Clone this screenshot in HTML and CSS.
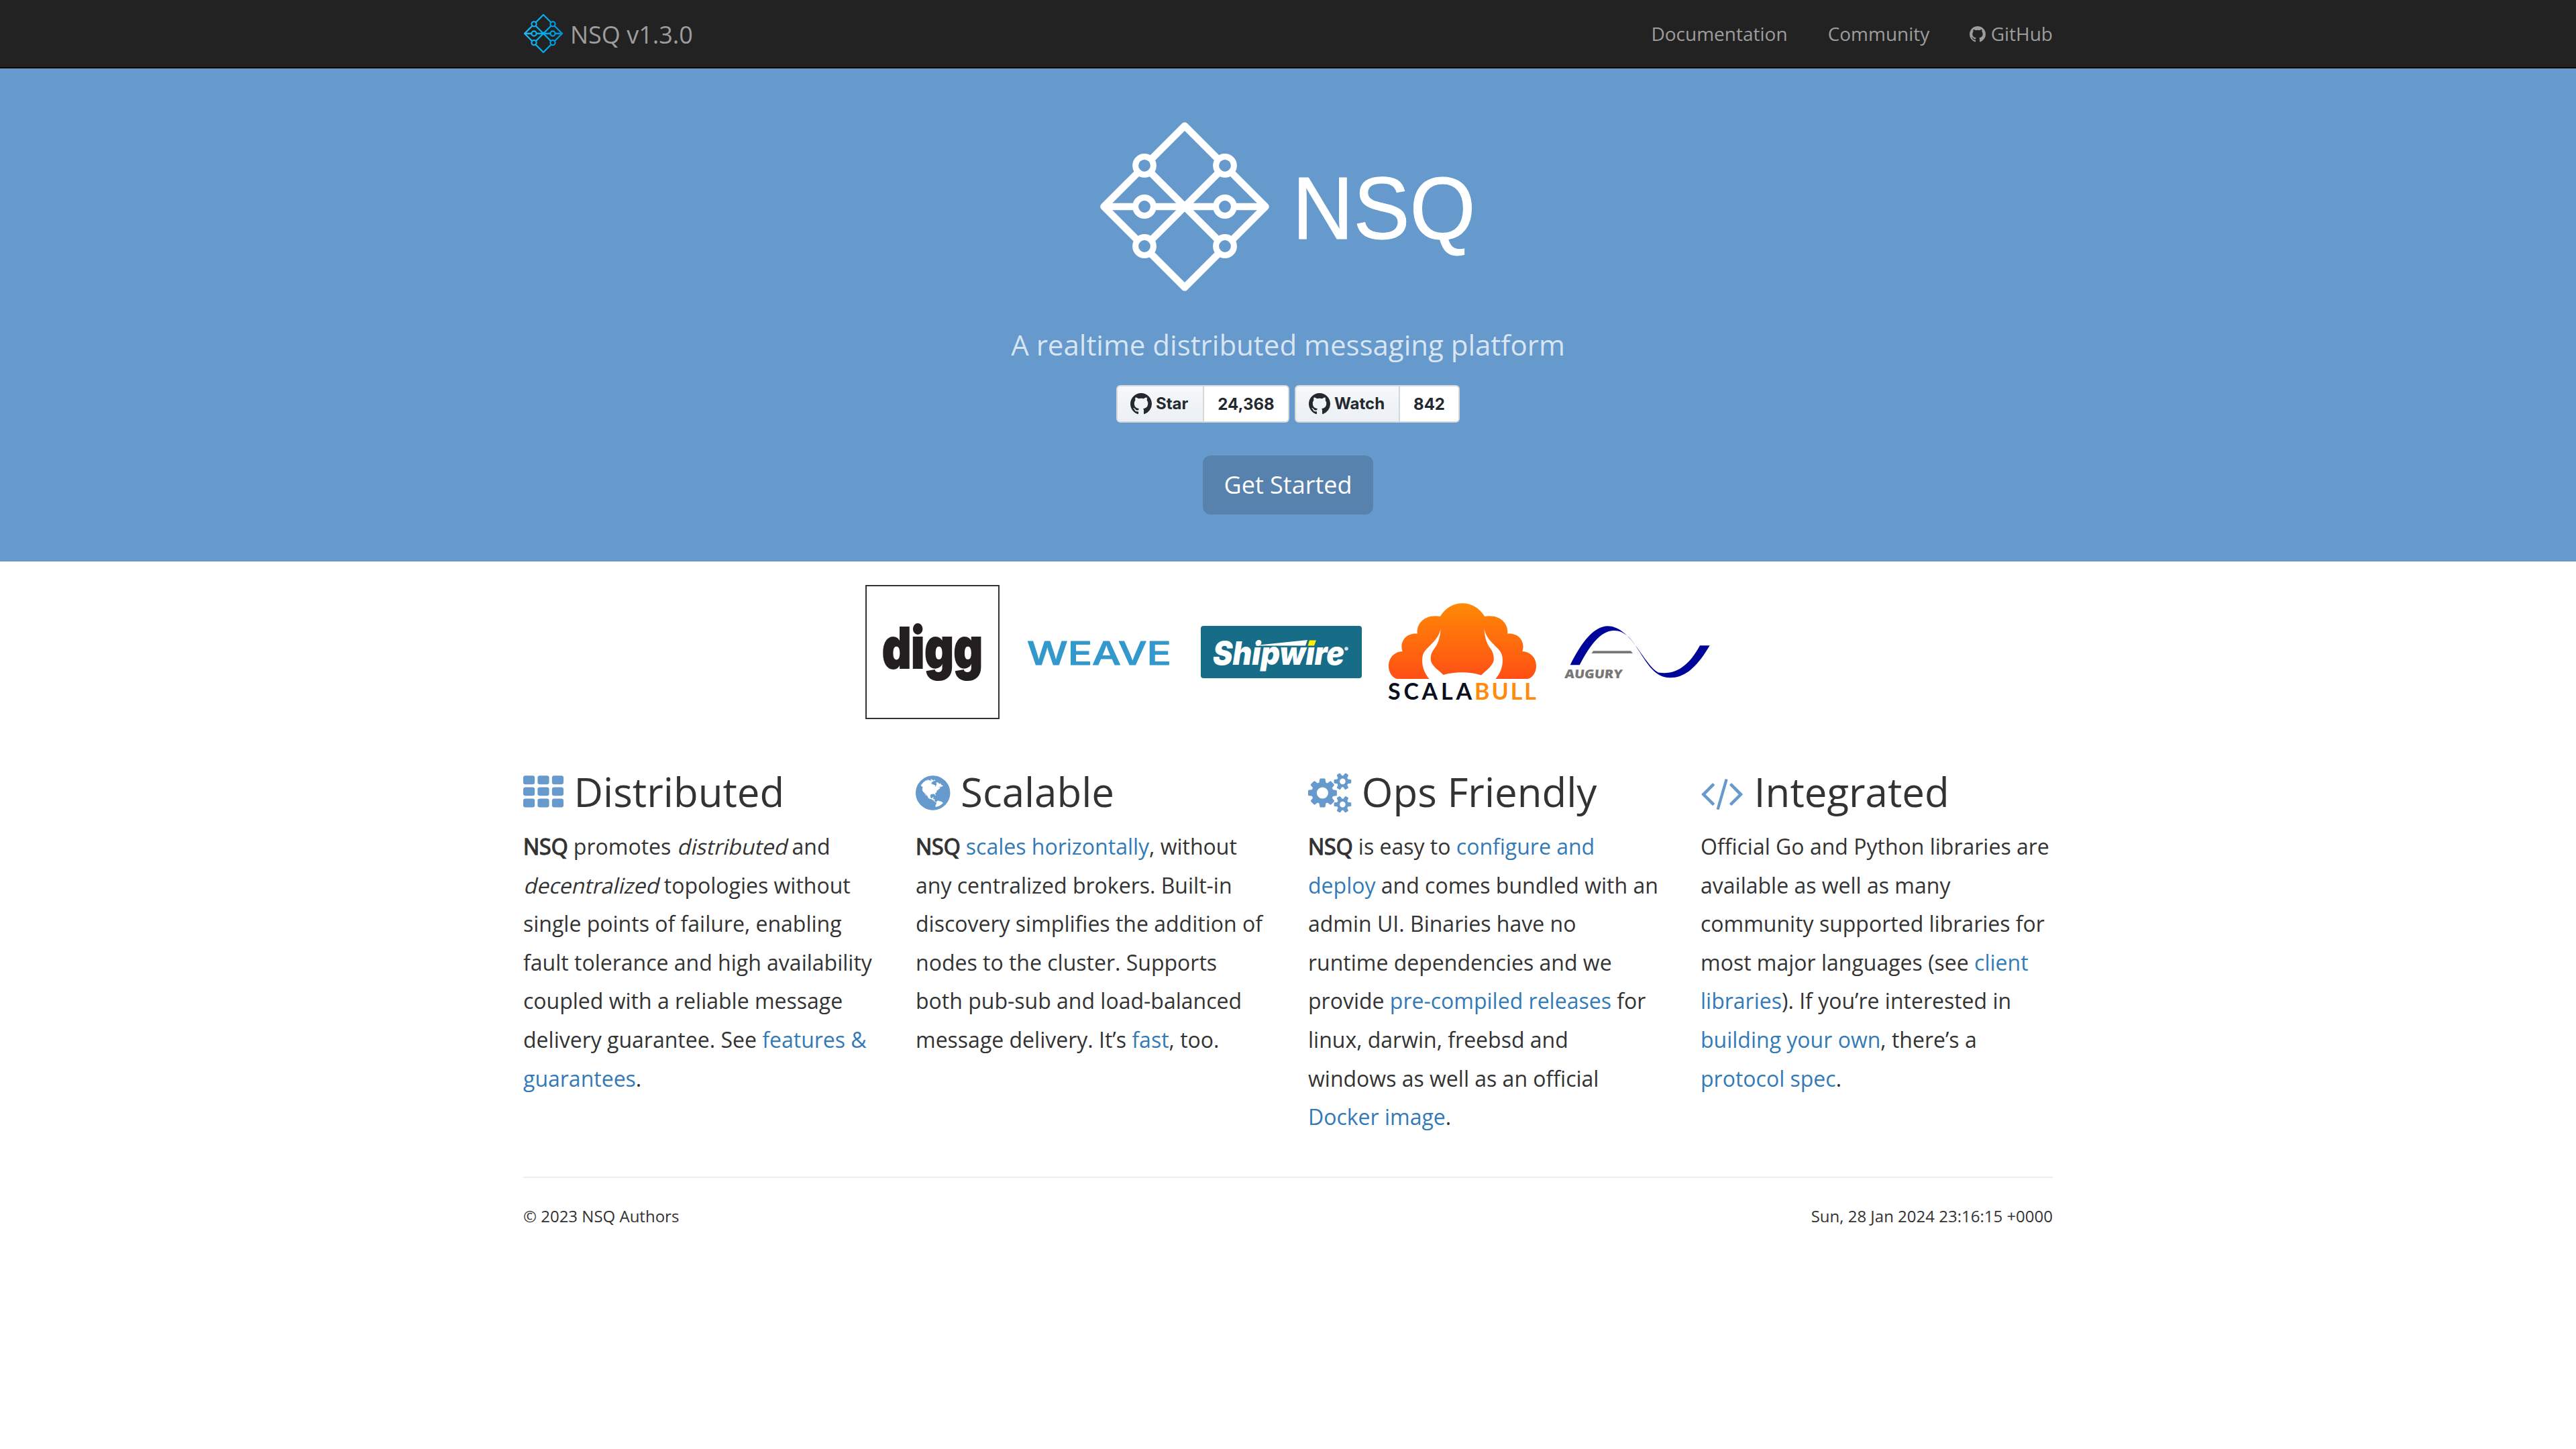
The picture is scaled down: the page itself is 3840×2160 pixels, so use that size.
FILE: index.html
```html
<!DOCTYPE html>
<html lang="en">
<head>
<meta charset="utf-8">
<title>NSQ</title>
<link rel="stylesheet" href="styles.css">
</head>
<body>
<svg class="defs" width="0" height="0" aria-hidden="true">
  <symbol id="octocat" viewBox="0 0 16 16"><path d="M8 0C3.58 0 0 3.58 0 8c0 3.54 2.29 6.53 5.47 7.59.4.07.55-.17.55-.38 0-.19-.01-.82-.01-1.49-2.01.37-2.53-.49-2.69-.94-.09-.23-.48-.94-.82-1.13-.28-.15-.68-.52-.01-.53.63-.01 1.08.58 1.23.82.72 1.21 1.87.87 2.33.66.07-.52.28-.87.51-1.07-1.78-.2-3.64-.89-3.64-3.95 0-.87.31-1.59.82-2.15-.08-.2-.36-1.02.08-2.12 0 0 .67-.21 2.2.82.64-.18 1.32-.27 2-.27.68 0 1.36.09 2 .27 1.53-1.04 2.2-.82 2.2-.82.44 1.1.16 1.92.08 2.12.51.56.82 1.27.82 2.15 0 3.07-1.87 3.75-3.65 3.95.29.25.54.73.54 1.48 0 1.07-.01 1.93-.01 2.2 0 .21.15.46.55.38A8.013 8.013 0 0016 8c0-4.42-3.58-8-8-8z"/></symbol>
</svg>

<nav class="navbar">
  <div class="container navbar-inner">
    <a class="brand" href="#">
      <svg class="brand-mark" viewBox="0 0 60 60">
        <defs><linearGradient id="brand" gradientUnits="userSpaceOnUse" x1="0" y1="0" x2="60" y2="0"><stop offset="0" stop-color="#2ab8f2"/><stop offset=".5" stop-color="#00adef"/><stop offset="1" stop-color="#0090da"/></linearGradient></defs>
        <g fill="none" stroke="url(#brand)" stroke-width="2.3" stroke-linejoin="round">
          <path d="M30 2L58 30L30 58L2 30ZM16 16L44 44M44 16L16 44"/>
          <path d="M2 30H58.01L58 30.01"/>
        </g>
        <g fill="#222" stroke="url(#brand)" stroke-width="2.1">
          <circle cx="16" cy="15.8" r="3.6"/><circle cx="44" cy="15.8" r="3.6"/>
          <circle cx="16" cy="30" r="3.6"/><circle cx="44" cy="30" r="3.6"/>
          <circle cx="16" cy="43.6" r="3.6"/><circle cx="44" cy="43.6" r="3.6"/>
        </g>
      </svg>
      <span>NSQ v1.3.0</span>
    </a>
    <div class="nav-links">
      <a href="#">Documentation</a>
      <a href="#">Community</a>
      <a href="#"><svg class="fa fa-narrow" viewBox="128 0 1536 1792"><path d="M896 128q209 0 385.5 103t279.5 279.5 103 385.5q0 251-146.5 451.5t-378.5 277.5q-27 5-40-7t-13-30q0-3 .5-76.5t.5-134.5q0-97-52-142 57-6 102.5-18t94-39 81-66.5 53-105 20.5-150.5q0-119-79-206 37-91-8-204-28-9-81 11t-92 44l-38 24q-93-26-192-26t-192 26q-16-11-42.5-27t-83.5-38.5-85-13.5q-45 113-8 204-79 87-79 206 0 85 20.5 150t52.5 105 80.5 67 94 39 102.5 18q-39 36-49 103-21 10-45 15t-57 5-65.5-21.5-55.5-62.5q-19-32-48.5-52t-49.5-24l-20-3q-21 0-29 4.5t-5 11.5 9 14 13 12l7 5q22 10 43.5 38t31.5 51l10 23q13 38 44 61.5t67 30 69.5 7 55.5-3.5l23-4q0 38 .5 88.5t.5 54.5q0 18-13 30t-40 7q-232-77-378.5-277.5t-146.5-451.5q0-209 103-385.5t279.5-279.5 385.5-103z"/></svg> GitHub</a>
    </div>
  </div>
</nav>

<header class="hero">
  <svg class="hero-logo" viewBox="0 0 560 252">
    <g fill="none" stroke="#fff" stroke-width="10.6" stroke-linejoin="round">
      <path d="M126 5.5L246.500 126L126 246.500L5.500 126ZM66 66L186 186M186 66L66 186"/>
      <path d="M5.500 126H246.500"/>
    </g>
    <g fill="#69c" stroke="#fff" stroke-width="9">
      <circle cx="66" cy="64.800" r="13.400"/><circle cx="186" cy="64.800" r="13.400"/>
      <circle cx="66" cy="126" r="13.400"/><circle cx="186" cy="126" r="13.400"/>
      <circle cx="66" cy="185" r="13.400"/><circle cx="186" cy="185" r="13.400"/>
    </g>
    <text class="hero-name" transform="translate(286.500 174) scale(1 1.045)">NSQ</text>
  </svg>
  <p class="lead">A realtime distributed messaging platform</p>
  <div class="gh-buttons">
    <div class="gh"><a class="gh-btn star" href="#"><svg><use href="#octocat"/></svg>Star</a><a class="gh-count stars" href="#">24,368</a></div>
    <div class="gh"><a class="gh-btn watch" href="#"><svg><use href="#octocat"/></svg>Watch</a><a class="gh-count watchers" href="#">842</a></div>
  </div>
  <a class="start" href="#">Get Started</a>
</header>

<section class="logos">
  <div class="digg"><svg viewBox="0 0 196 196"><text x="23" y="122" textLength="150" lengthAdjust="spacingAndGlyphs">digg</text></svg></div>
  <svg class="weave" viewBox="0 0 220 40"><text x="1" y="38.500" textLength="215" lengthAdjust="spacingAndGlyphs">WEAVE</text></svg>
  <svg class="shipwire" viewBox="0 0 240 78">
    <rect width="240" height="78" rx="4" fill="#176c88"/>
    <text x="18" y="58" textLength="196" lengthAdjust="spacingAndGlyphs">Shipwıre</text>
    <path d="M82 29L159 21L156 29.500H82Z" fill="#fff"/>
    <path d="M162 21.500H172L169 29.500H159.500Z" fill="#fff200"/>
    <circle cx="217" cy="34" r="2.800" fill="#cfe2e8"/>
  </svg>
  <svg class="scalabull" viewBox="0 0 220 146">
    <defs><linearGradient id="bull" x1="0" y1="0" x2="0" y2="1"><stop offset="0" stop-color="#ff8905"/><stop offset="1" stop-color="#ff4f15"/></linearGradient></defs>
    <path fill="url(#bull)" d="M12 113C4 110 0 102 0 94C0 81 9 72.500 20.700 72C16 60 24 44 42.800 45.500C41 30 55 16 76.800 20C92 -6.500 128 -6.500 143.200 20C165 16 179 30 177.200 45.500C196 44 204 60 199.300 72C211 72.500 220 81 220 94C220 102 216 110 208 113H159.500C168 103 171 92 169.500 80C168 72 164 69 157 62C149 54 144 47 142.500 38C143 52 147 62 152 68C156 73 158 82 156 88C152 96 145 101 138 107.500C120 102 100 102 81.500 107C75 100 67 96 63.500 88C61.500 82 63 74 68 68C73 62 77 52 77.500 38C76 47 71 54 63 62C56 69 52 72 50.500 80C49 92 52 103 60.500 113Z"/>
    <text x="-1" y="144" textLength="125" lengthAdjust="spacing" fill="#0a1020">SCALA</text>
    <text x="128" y="144" textLength="92" lengthAdjust="spacing" fill="#ff8a0c">BULL</text>
  </svg>
  <svg class="augury" viewBox="0 0 220 80">
    <path fill="#000599" d="M10.700 59.300C27 26 46 1.300 66.700 1.300C82 1.300 95 14 104 25C118 43 130 64 142 70.500C168 75 188 60 204 30.300H218.700C200 62 182 78.300 160 78.300C135 78.300 124 54 109 32C103 22 92 8 76 8C56 8 40 30 24.700 59.300Z"/>
    <path fill="#777" d="M45 38.300H101L104 42H42.500Z"/>
    <text transform="translate(2 79) skewX(-6)" textLength="86" lengthAdjust="spacingAndGlyphs">AUGURY</text>
  </svg>
</section>

<main class="container features">
  <section>
    <h2><svg class="fa" viewBox="0 0 1792 1792"><rect y="128" width="512" height="384" rx="96"/><rect x="640" y="128" width="512" height="384" rx="96"/><rect x="1280" y="128" width="512" height="384" rx="96"/><rect y="640" width="512" height="384" rx="96"/><rect x="640" y="640" width="512" height="384" rx="96"/><rect x="1280" y="640" width="512" height="384" rx="96"/><rect y="1152" width="512" height="384" rx="96"/><rect x="640" y="1152" width="512" height="384" rx="96"/><rect x="1280" y="1152" width="512" height="384" rx="96"/></svg> Distributed</h2>
    <p><b>NSQ</b> promotes <em>distributed</em> and <em>decentralized</em> topologies without single points of failure, enabling fault tolerance and high availability coupled with a reliable message delivery guarantee. See <a href="#">features &amp; guarantees</a>.</p>
  </section>
  <section>
    <h2><svg class="fa fa-narrow" viewBox="128 0 1536 1792"><path d="M896 128q209 0 385.5 103t279.5 279.5 103 385.5-103 385.5-279.5 279.5-385.5 103-385.5-103-279.5-279.5-103-385.5 103-385.5 279.5-279.5 385.5-103zm274 521q-2 1-9.5 9.5t-13.5 9.5q2 0 4.5-5t5-11 3.5-7q6-7 22-15 14-6 52-12 34-8 51 11-2-2 9.5-13t14.5-12q3-2 15-4.5t15-7.5l2-22q-12 1-17.5-7t-6.5-21q0 2-6 8 0-7-4.5-8t-11.5 1-9 1q-10-3-15-7.5t-8-16.5-4-15q-2-5-9.5-11t-9.5-10q-1-2-2.5-5.5t-3-6.5-4-5.5-5.5-2.5-7 5-7.5 10-4.5 5q-3-2-6-1.5t-4.5 1-4.5 3-5 3.5q-3 2-8.5 3t-8.5 2q15-5-1-11-10-4-16-3 9-4 7.5-12t-8.5-14h5q-1-4-8.5-8.5t-17.5-8.5-13-6q-8-5-34-9.5t-33-.5q-5 6-4.5 10.5t4 14 3.5 12.5q1 6-5.5 13t-6.5 12q0 7 14 15.500t10 21.500q-3 8-16 16t-16 12q-5 8-1.500 18.500t10.500 16.500q2 2 1.500 4t-3.500 4.500-5.500 4-6.500 3.500l-3 2q-11 5-20.500-6t-13.500-26q-7-25-16-30-23-8-29 1-5-13-41-26-25-9-58-4 6-1 0-15-7-15-19-12 3-6 4-17.500t1-13.500q3-13 12-23 1-1 7-8.500t9.500-13.500.5-6q35 4 50-11 5-5 11.500-17t10.500-17q9-6 14-5.500t14.500 5.500 14.500 5q14 1 15.500-11t-7.500-20q12 1 3-17-4-7-8-9-12-4-27 5-8 4 2 8-1-1-9.500 10.500t-16.500 17.500-16-5q-1-1-5.500-13.500t-9.500-13.500q-8 0-16 15 3-8-11-15t-24-8q19-12-8-27-7-4-20.500-5t-19.500 4q-5 7-5.500 11.500t5 8 10.500 5.500 11.500 4 8.500 3q14 10 8 14-2 1-8.500 3.500t-11.500 4.500-6 4q-3 4 0 14t-2 14q-5-5-9-17.500t-7-16.500q7 9-25 6l-10-1q-4 0-16 2t-20.500 1-13.500-8q-4-8 0-20 1-4 4-2-4-3-11-9.500t-10-8.500q-46 15-94 41 6 1 12-1 5-2 13-6.500t10-5.500q34-14 42-7l5-5q14 16 20 25-7-4-30-1-20 6-22 12 7 12 5 18-4-3-11.500-10t-14.500-11-15-5q-16 0-22 1-146 80-235 222 7 7 12 8 4 1 5 9t2.500 11 11.500-3q9 8 3 19 1-1 44 27 19 17 21 21 3 11-10 18-1-2-9-9t-9-4q-3 5 .5 18.500t10.500 12.500q-7 0-9.500 16t-2.500 35.500-1 23.500l2 1q-3 12 5.500 34.500t21.500 19.500q-13 3 20 43 6 8 8 9 3 2 12 7.500t15 10 10 10.500q4 5 10 22.500t14 23.500q-2 6 9.500 20t10.500 23q-1 0-2.500 1t-2.500 1q3 7 15.500 14t15.500 13q1 3 2 10t3 11 8 2q2-20-24-62-15-25-17-29-3-5-5.500-15.500t-4.500-14.500q2 0 6 1.500t8.500 3.500 7.500 4 2 3q-3 7 2 17.500t12 18.500 17 19 12 13q6 6 14 19.500t0 13.500q9 0 20 10.500t17 19.500q5 8 8 26t5 24q2 7 8.500 13.500t12.500 9.500l16 8 13 7q5 2 18.500 10.500t21.500 11.500q10 4 16 4t14.500-2.500 13.500-3.500q15-2 29 15t21 21q36 19 55 11-2 1 .5 7.500t8 15.500 9 14.500 5.500 8.500q5 6 18 15t18 15q6-4 7-9-3 8 7 20t18 10q14-3 14-32-31 15-49-18 0-1-2.500-5.500t-4-8.500-2.500-8.500 0-7.500 5-3q9 0 10-3.500t-2-12.500-4-13q-1-8-11-20t-12-15q-5 9-16 8t-16-9q0 1-1.500 5.500t-1.500 6.500q-13 0-15-1 1-3 2.500-17.500t3.500-22.500q1-4 5.500-12t7.500-14.500 4-12.500-4.500-9.500-17.500-2.500q-19 1-26 20-1 3-3 10.500t-5 11.500-9 7q-7 3-24 2t-24-5q-13-8-22.500-29t-9.500-37q0-10 2.500-26.500t3-25-5.500-24.500q3-2 9-9.500t10-10.500q2-1 4.500-1.500t4.500 0 4-1.500 3-6q-1-1-4-3-3-3-4-3 7 3 28.500-1.500t27.500 1.500q15 11 22-2 0-1-2.500-9.500t-.5-13.500q5 27 29 9 3 3 15.500 5t17.500 5q3 2 7 5.500t5.500 4.500 5-.5 8.500-6.500q10 14 12 24 11 40 19 44 7 3 11 2t4.500-9.500 0-14-1.500-12.500l-1-8v-18l-1-8q-15-3-18.500-12t1.500-18.500 15-18.500q1-1 8-3.500t15.500-6.500 12.500-8q21-19 15-35 7 0 11-9-1 0-5-3t-7.500-5-4.500-2q9-5 2-16 5-3 7.500-11t7.500-10q9 12 21 2 8-8 1-16 5-7 20.500-10.500t18.500-9.500q7 2 8-2t1-12 3-12q4-5 15-9t13-5l17-11q3-4 0-4 18 2 31-11 10-11-6-20 3-6-3-9.500t-15-5.500q3-1 11.500-.5t10.500-1.500q15-10-7-16-17-5-43 12zm-163 877q206-36 351-189-3-3-12.500-4.500t-12.500-3.500q-18-7-24-8 1-7-2.500-13t-8-9-12.500-8-11-7q-2-2-7-6t-7-5.500-7.500-4.500-8.500-2-10 1l-3 1q-3 1-5.500 2.500t-5.500 3-4 3 0 2.500q-21-17-36-22-5-1-11-5.500t-10.500-7-10-1.500-11.500 7q-5 5-6 15t-2 13q-7-5 0-17.500t2-18.500q-3-6-10.500-4.500t-12 4.500-11.500 8.500-9 6.500-8.500 5.500-8.500 7.500q-3 4-6 12t-5 11q-2-4-11.500-6.500t-9.500-5.500q2 10 4 35t5 38q7 31-12 48-27 25-29 40-4 22 12 26 0 7-8 20.500t-7 21.500q0 6 2 16z"/></svg> Scalable</h2>
    <p><b>NSQ</b> <a href="#">scales horizontally</a>, without any centralized brokers. Built-in discovery simplifies the addition of nodes to the cluster. Supports both pub-sub and load-balanced message delivery. It’s <a href="#">fast</a>, too.</p>
  </section>
  <section>
    <h2><svg class="fa fa-wide" viewBox="-64 0 1920 1792"><path d="M832 896q0-106-75-181t-181-75-181 75-75 181 75 181 181 75 181-75 75-181zm768 512q0-52-38-90t-90-38-90 38-38 90q0 53 37.500 90.500t90.500 37.500 90.500-37.500 37.500-90.500zm0-1024q0-52-38-90t-90-38-90 38-38 90q0 53 37.500 90.500t90.500 37.500 90.500-37.500 37.500-90.500zm-384 421v185q0 10-7 19.500t-16 10.500l-155 24q-11 35-32 76 34 48 90 115 7 11 7 20 0 12-7 19-23 30-82.500 89.500t-78.500 59.500q-11 0-21-7l-115-90q-37 19-77 31-11 108-23 155-7 24-30 24h-186q-11 0-20-7.500t-10-17.500l-23-153q-34-10-75-31l-118 89q-7 7-20 7-11 0-21-8-144-133-144-160 0-9 7-19 10-14 41-53t47-61q-23-44-35-82l-152-24q-10-1-17-9.500t-7-19.500v-185q0-10 7-19.500t16-10.500l155-24q11-35 32-76-34-48-90-115-7-11-7-20 0-12 7-20 22-30 82-89t79-59q11 0 21 7l115 90q34-18 77-32 11-108 23-154 7-24 30-24h186q11 0 20 7.500t10 17.500l23 153q34 10 75 31l118-89q8-7 20-7 11 0 21 8 144 133 144 160 0 8-7 19-12 16-42 54t-45 60q23 48 34 82l152 23q10 2 17 10.500t7 19.500zm640 533v140q0 16-149 31-12 27-30 52 51 113 51 138 0 4-4 7-122 71-124 71-8 0-46-47t-52-68q-20 2-30 2t-30-2q-14 21-52 68t-46 47q-2 0-124-71-4-3-4-7 0-25 51-138-18-25-30-52-149-15-149-31v-140q0-16 149-31 13-29 30-52-51-113-51-138 0-4 4-7 4-2 35-20t59-34 30-16q8 0 46 46.500t52 67.500q20-2 30-2t30 2q51-71 92-112l6-2q4 0 124 70 4 3 4 7 0 25-51 138 17 23 30 52 149 15 149 31zm0-1024v140q0 16-149 31-12 27-30 52 51 113 51 138 0 4-4 7-122 71-124 71-8 0-46-47t-52-68q-20 2-30 2t-30-2q-14 21-52 68t-46 47q-2 0-124-71-4-3-4-7 0-25 51-138-18-25-30-52-149-15-149-31v-140q0-16 149-31 13-29 30-52-51-113-51-138 0-4 4-7 4-2 35-20t59-34 30-16q8 0 46 46.500t52 67.500q20-2 30-2t30 2q51-71 92-112l6-2q4 0 124 70 4 3 4 7 0 25-51 138 17 23 30 52 149 15 149 31z"/></svg> Ops Friendly</h2>
    <p><b>NSQ</b> is easy to <a href="#">configure and deploy</a> and comes bundled with an admin UI. Binaries have no runtime dependencies and we provide <a href="#">pre-compiled releases</a> for linux, darwin, freebsd and windows as well as an official <a href="#">Docker image</a>.</p>
  </section>
  <section>
    <h2><svg class="fa fa-wide" viewBox="0 0 1920 1792"><path d="M617 1399l-50 50q-10 10-23 10t-23-10l-466-466q-10-10-10-23t10-23l466-466q10-10 23-10t23 10l50 50q10 10 10 23t-10 23l-393 393 393 393q10 10 10 23t-10 23zm591-1067l-373 1291q-4 13-15.500 19.500t-23.500 2.500l-62-17q-13-4-19.500-15.500t-2.500-24.500l373-1291q4-13 15.500-19.500t23.500-2.500l62 17q13 4 19.500 15.500t2.500 24.500zm657 651l-466 466q-10 10-23 10t-23-10l-50-50q-10-10-10-23t10-23l393-393-393-393q-10-10-10-23t10-23l50-50q10-10 23-10t23 10l466 466q10 10 10 23t-10 23z"/></svg> Integrated</h2>
    <p>Official Go and Python libraries are available as well as many community supported libraries for most major languages (see <a href="#">client libraries</a>). If you’re interested in <a href="#">building your own</a>, there’s a <a href="#">protocol spec</a>.</p>
  </section>
</main>

<footer class="container">
  <div class="footer-row">
    <span>© 2023 NSQ Authors</span>
    <span>Sun, 28 Jan 2024 23:16:15 +0000</span>
  </div>
</footer>
</body>
</html>
```
FILE: styles.css
```css
* { box-sizing: border-box; }
body {
  margin: 0;
  background: #fff;
  color: #333;
  font: 32px/57.6px "Open Sans", "Noto Sans", sans-serif;
}
a { color: #337ab7; text-decoration: none; }
svg { display: block; overflow: visible; }
.defs { position: absolute; }
.container { width: 2340px; margin: 0 auto; padding: 0 30px; }

.navbar { height: 102px; background: #222; border-bottom: 2px solid #080808; }
.navbar-inner { display: flex; justify-content: space-between; }
.navbar a { color: #9d9d9d; }
.brand { display: flex; align-items: center; gap: 10px; height: 100px; font-size: 36px; line-height: 40px; }
.brand-mark { width: 60px; height: 60px; }
.brand span { padding-top: 4px; }
.nav-links { display: flex; gap: 60px; font-size: 28px; line-height: 40px; padding-top: 30px; }

.fa { display: inline-block; width: 1em; height: 1em; vertical-align: -0.143em; fill: currentColor; }
.fa-narrow { width: 0.857em; }
.fa-wide { width: 1.071em; }

.hero {
  display: flex;
  flex-direction: column;
  align-items: center;
  height: 735px;
  padding-top: 80px;
  background: #69c;
}
.hero-logo { width: 560px; height: 252px; }
.hero-name {
  font-family: "Liberation Sans", Arial, sans-serif;
  font-size: 126px;
  fill: #fff;
  stroke: #fff;
  stroke-width: 1;
}
.lead { margin: 50px 0 30px; font-size: 42px; line-height: 60px; color: rgba(255, 255, 255, .75); }

.gh-buttons { display: flex; gap: 8px; margin-bottom: 49px; }
.gh { display: flex; height: 56px; font: 700 24px/54px Inter, "Liberation Sans", sans-serif; }
.gh a { color: #24292f; border: 2px solid #d5d8da; }
.gh-btn {
  display: flex;
  align-items: center;
  gap: 6px;
  padding-left: 19px;
  border-radius: 6px 0 0 6px;
  background: linear-gradient(#f6f8fa, #ebf0f4);
}
.gh-btn svg { width: 32px; height: 32px; fill: #24292f; }
.gh .gh-count { border-left: 0; border-radius: 0 6px 6px 0; background: #fff; text-align: center; }
.star { width: 131px; }
.stars { width: 127px; }
.watch { width: 157px; }
.watchers { width: 89px; }

.start {
  padding: 0 32px;
  border-radius: 12px;
  background: rgba(0, 0, 0, .15);
  color: #fff;
  font-size: 36px;
  line-height: 88px;
}

.logos { display: flex; justify-content: center; align-items: center; gap: 40px; height: 270px; }
.digg { width: 200px; height: 200px; border: 2px solid #333; }
.digg text { font: 900 84px Inter, sans-serif; fill: #231f20; stroke: #231f20; stroke-width: 2; }
.weave { width: 220px; height: 40px; }
.weave text { font: 500 48px Inter, sans-serif; fill: #39c; stroke: #39c; stroke-width: 1; stroke-linejoin: round; }
.shipwire { width: 240px; height: 78px; }
.shipwire text { font: italic 900 48px Inter, sans-serif; fill: #fff; }
.scalabull { width: 220px; height: 146px; }
.scalabull text { font: 700 34px Lato, sans-serif; }
.augury { width: 220px; height: 80px; }
.augury text { font: 800 18px "Open Sans", sans-serif; fill: #777; }

.features { display: grid; grid-template-columns: repeat(4, 525px); gap: 60px; padding-top: 40px; }
h2 { margin: 0 0 20px; font-size: 60px; font-weight: 400; line-height: 66px; white-space: nowrap; }
h2 .fa { color: #69c; }
p { margin: 0 0 20px; }
b { font-weight: 400; -webkit-text-stroke: 1.3px currentColor; }
em { display: inline-block; font-style: normal; transform: skewX(-13deg); transform-origin: 0 72%; }

.footer-row {
  display: flex;
  justify-content: space-between;
  margin-top: 40px;
  padding-top: 39px;
  border-top: 2px solid #eee;
  font-size: 24px;
  line-height: 36px;
}
```
